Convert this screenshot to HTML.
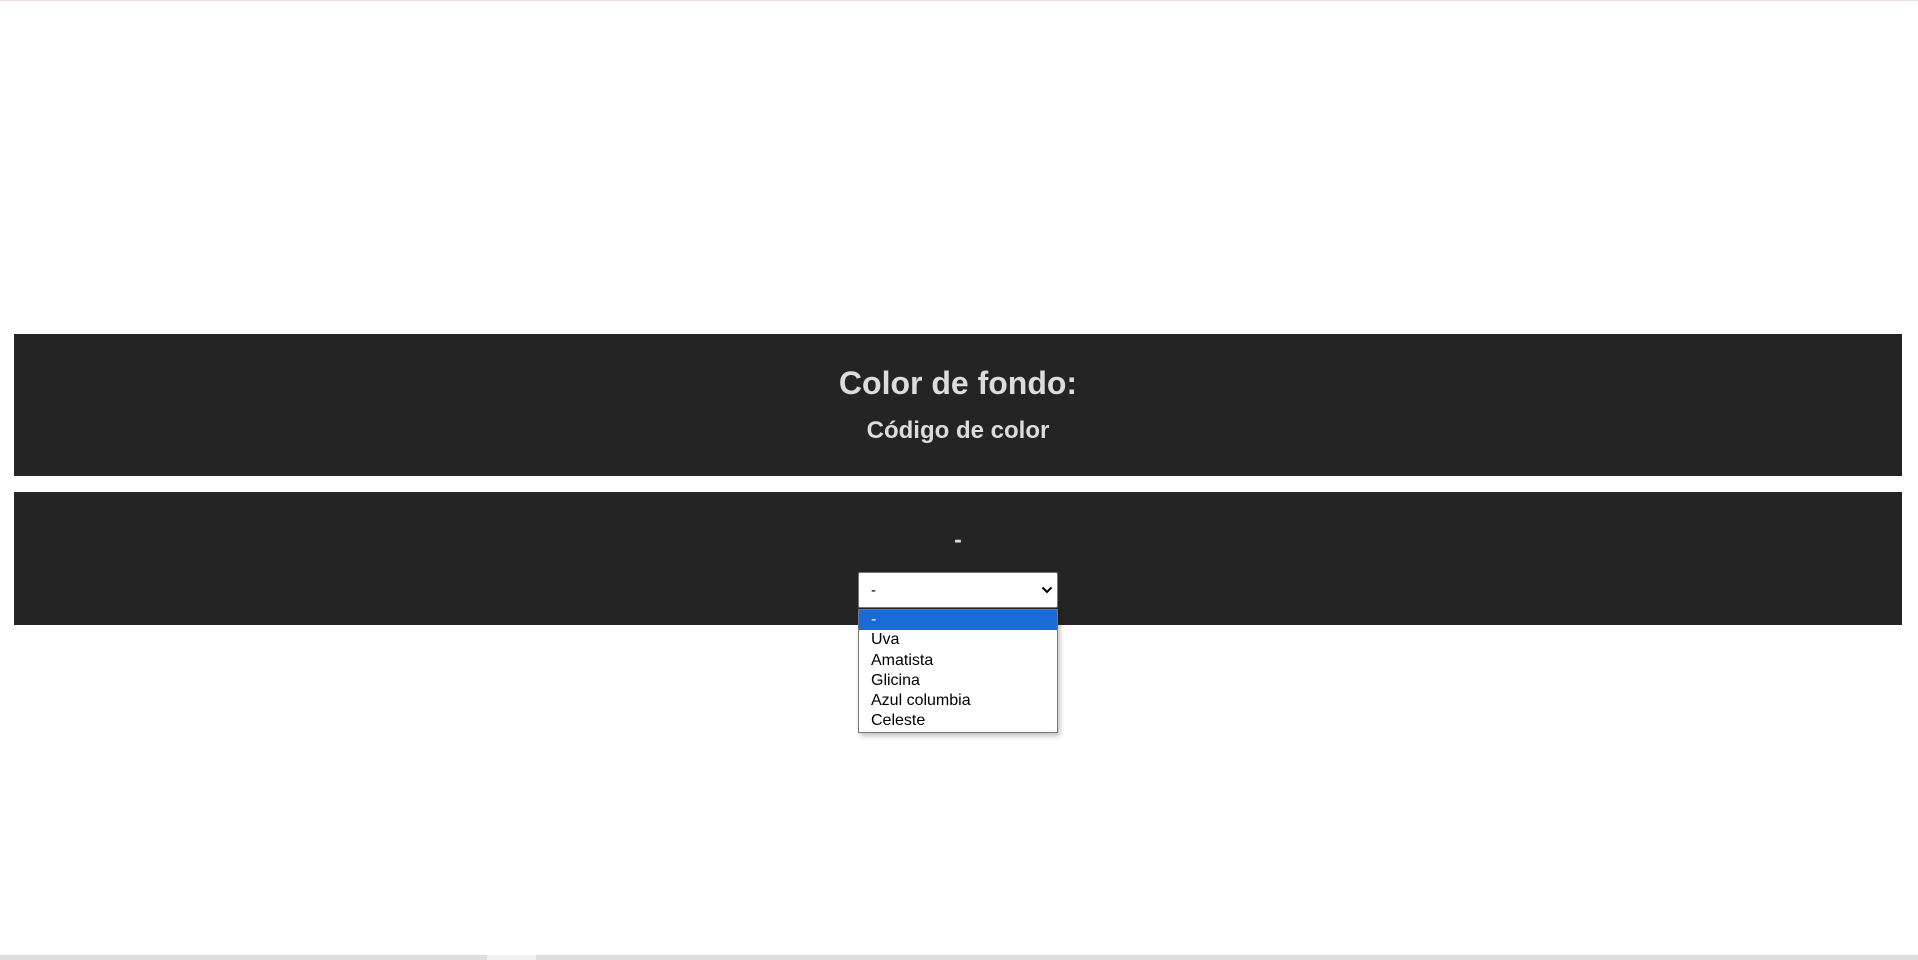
<!DOCTYPE html>
<html><head><meta charset="utf-8"><style>
html,body{margin:0;padding:0;background:#fff;width:1918px;height:960px;overflow:hidden;font-family:"Liberation Sans",Arial,sans-serif;position:relative}
.top{position:absolute;left:0;top:0;width:1918px;height:1px;background:#f6dcd2}
.band{position:absolute;left:14px;width:1888px;background:#242424;color:#dcdcdc;text-align:center}
.t1{position:absolute;left:0;right:0;top:32px;font-size:32px;font-weight:bold;line-height:34px}
.t2{position:absolute;left:0;right:0;top:83px;font-size:24px;font-weight:bold;line-height:28px}
.dash{position:absolute;left:0;right:0;top:33px;font-size:23px;font-weight:bold;line-height:28px}
.sel{position:absolute;left:858px;top:572px;width:198px;height:34px;background:#fff;border:1px solid #767676;border-radius:2px}
.sel span{position:absolute;left:12px;top:9px;font-size:15px;color:#000}
.sel svg{position:absolute;right:4px;top:13px}
.dd{position:absolute;left:858px;top:609px;width:198px;height:122px;background:#fff;border:1px solid #767676;box-shadow:2px 3px 5px rgba(0,0,0,.25);font-size:16px;color:#000}
.dd div{height:20.3px;line-height:20px;padding-left:12px}
.dd .h{background:#1a6ad8;color:#fff}
.sb{position:absolute;left:0;top:955px;width:1918px;height:5px;background:#dedede}
.sb i{position:absolute;left:487px;top:0;width:49px;height:5px;background:#f1f1f1}
</style></head><body>
<div class="top"></div>
<div class="band" style="top:334px;height:142px">
<div class="t1">Color de fondo:</div>
<div class="t2">Código de color</div>
</div>
<div class="band" style="top:492px;height:133px">
<div class="dash">-</div>
</div>
<div class="sel"><span>-</span><svg width="12" height="8" viewBox="0 0 12 8"><path d="M1.5 1.5 L6 6 L10.5 1.5" stroke="#000" stroke-width="2" fill="none"/></svg></div>
<div class="dd">
<div class="h">-</div>
<div>Uva</div>
<div>Amatista</div>
<div>Glicina</div>
<div>Azul columbia</div>
<div>Celeste</div>
</div>
<div class="sb"><i></i></div>
</body></html>
